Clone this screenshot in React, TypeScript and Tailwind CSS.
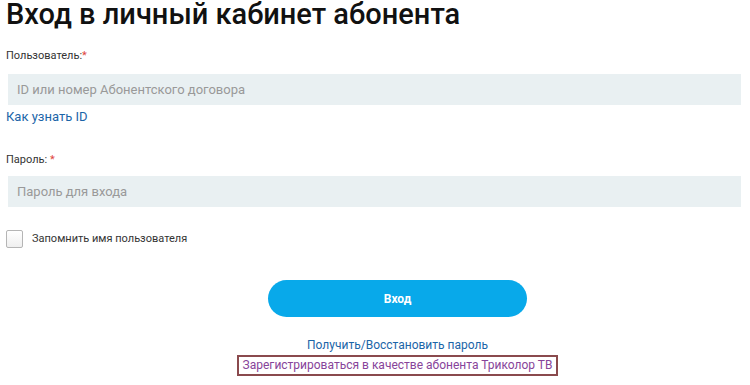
export default function App() {
  return (
    <div className="w-[750px] h-[385px] bg-white overflow-hidden font-['Roboto',sans-serif] text-[#333]">
      <h1 className="pl-[6px] text-[29px] leading-[28px] font-medium text-[#111]">
        Вход в личный кабинет абонента
      </h1>

      <div className="pl-[8px] pr-[9px]">
        <label className="block mt-[21px] text-[11px] leading-[14px] -ml-[2px]">
          Пользователь:<span className="text-[#e0463e]">*</span>
        </label>
        <div className="mt-[11px] h-[31px] bg-[#e9f0f2] flex items-center px-[9px] text-[13px] text-[#999]">
          ID или номер Абонентского договора
        </div>
        <a href="#" className="block -ml-[2px] mt-[4px] text-[13px] leading-[16px] text-[#1b65a8]">
          Как узнать ID
        </a>

        <label className="block mt-[28px] text-[11px] leading-[14px] -ml-[2px]">
          Пароль: <span className="text-[#e0463e]">*</span>
        </label>
        <div className="mt-[9px] h-[31px] bg-[#e9f0f2] flex items-center px-[9px] text-[13px] text-[#999]">
          Пароль для входа
        </div>

        <label className="flex items-center mt-[23px] -ml-[2px] gap-[9px] text-[11px]">
          <span className="w-[17px] h-[18px] border border-[#b5b5b5] rounded-[2px] bg-gradient-to-b from-white to-[#efefef]" />
          Запомнить имя пользователя
        </label>
      </div>

      <div className="pl-[45px] flex flex-col items-center">
        <button className="mt-[32px] w-[259px] h-[37px] rounded-full bg-[#08a9ea] text-white text-[12px] font-bold">
          Вход
        </button>
        <a href="#" className="mt-[20px] text-[12px] leading-[16px] text-[#1b65a8]">
          Получить/Восстановить пароль
        </a>
        <a
          href="#"
          className="mt-[2px] border-2 border-[#8a4a4d] px-[4px] text-[12px] leading-[17px] text-[#87449a]"
        >
          Зарегистрироваться в качестве абонента Триколор ТВ
        </a>
      </div>
    </div>
  );
}
